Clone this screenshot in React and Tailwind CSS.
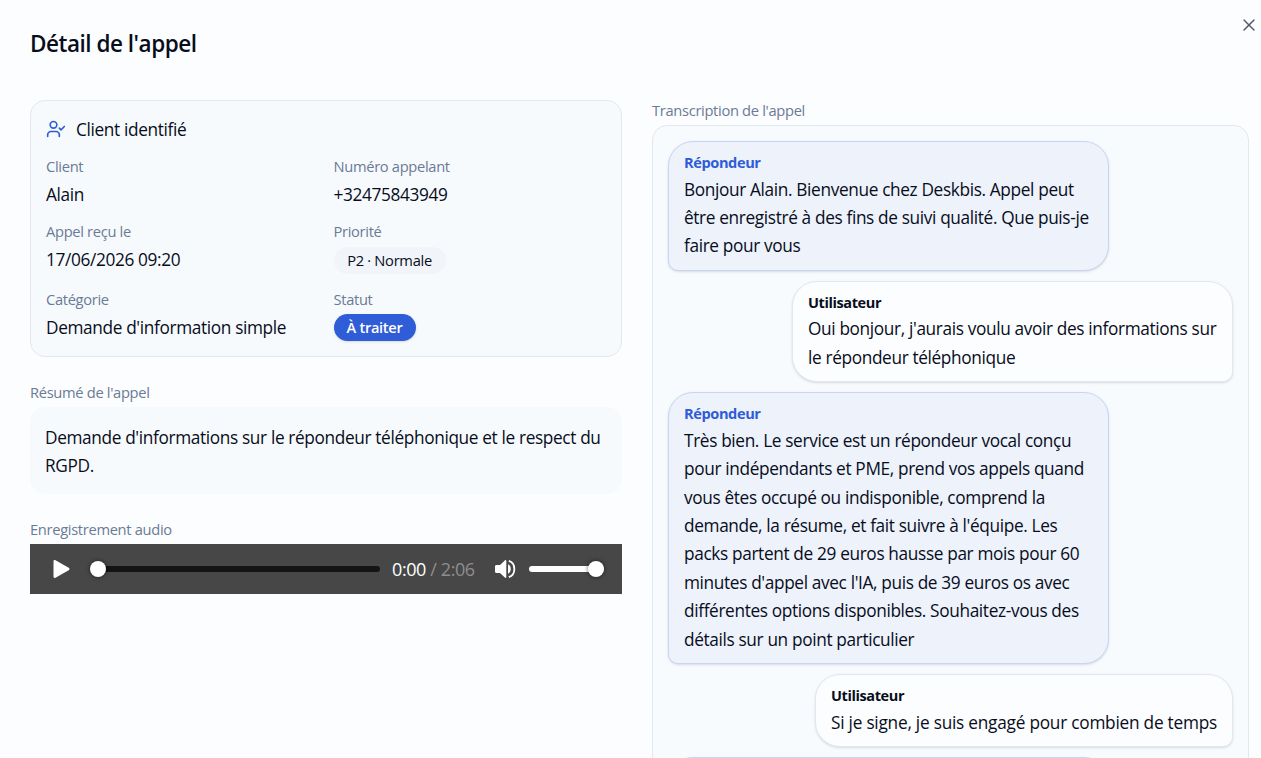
import React from 'react';
import { UserCheck, X } from 'lucide-react';

const messages = [
  {
    role: 'agent',
    lines: [
      'Bonjour Alain. Bienvenue chez Deskbis. Appel peut',
      'être enregistré à des fins de suivi qualité. Que puis-je',
      'faire pour vous',
    ],
  },
  {
    role: 'user',
    width: 'w-[441px]',
    lines: ["Oui bonjour, j'aurais voulu avoir des informations sur", 'le répondeur téléphonique'],
  },
  {
    role: 'agent',
    lines: [
      'Très bien. Le service est un répondeur vocal conçu',
      'pour indépendants et PME, prend vos appels quand',
      'vous êtes occupé ou indisponible, comprend la',
      "demande, la résume, et fait suivre à l'équipe. Les",
      'packs partent de 29 euros hausse par mois pour 60',
      "minutes d'appel avec l'IA, puis de 39 euros os avec",
      'différentes options disponibles. Souhaitez-vous des',
      'détails sur un point particulier',
    ],
  },
  {
    role: 'user',
    width: 'w-[418px] tracking-[-0.24px]',
    lines: ['Si je signe, je suis engagé pour combien de temps'],
  },
  { role: 'agent', lines: [] },
];

const Label = ({ children }) => (
  <p className="pb-[2px] text-[14.7px] leading-[20.5px] tracking-[-0.32px] text-[#6a7b95]">{children}</p>
);

const Field = ({ label, children }) => (
  <div>
    <Label>{label}</Label>
    <div className="mt-[2px]">{children}</div>
  </div>
);

const Value = ({ children }) => <p className="leading-[27px]">{children}</p>;

const Bubble = ({ message }) => {
  const isAgent = message.role === 'agent';
  return (
    <div
      className={
        isAgent
          ? 'min-h-[60px] w-[441px] shrink-0 self-start rounded-[25px] rounded-bl-[10px] border border-[#c8d5f3] bg-[#edf2fb] px-[15px] py-[10px] shadow-sm'
          : `${message.width} shrink-0 self-end rounded-[25px] rounded-br-[10px] border border-[#e2e8f0] bg-[#fcfdff] px-[15px] py-[10px] shadow-sm`
      }
    >
      {message.lines.length > 0 && (
        <p
          className={
            isAgent
              ? 'pb-px text-[14.6px] leading-[21.5px] font-bold tracking-[-0.4px] text-[#2f5cd7]'
              : 'text-[14.5px] leading-[22.5px] font-bold tracking-[-0.4px]'
          }
        >
          {isAgent ? 'Répondeur' : 'Utilisateur'}
        </p>
      )}
      {message.lines.map((line, i) => (
        <p key={i} className="relative top-px leading-[28.44px] whitespace-nowrap">{line}</p>
      ))}
    </div>
  );
};

const AudioPlayer = () => (
  <div className="flex h-[50px] items-center bg-[#474747] pl-[22px] text-white">
    <svg width="18" height="20" viewBox="0 0 18 20" fill="currentColor">
      <path d="M1.500 2.400C1.500 1.200 2.500.7 3.500 1.300l13.200 7.400c1 .6 1 2 0 2.600L3.500 18.700C2.500 19.300 1.500 18.800 1.500 17.600z" />
    </svg>
    <div className="ml-[20px] flex h-[6px] w-[290px] items-center rounded-full bg-gradient-to-r from-transparent from-[8px] to-[#141414] to-[8px]">
      <div className="size-4 rounded-full bg-white shadow-[0_0_4px_rgba(0,0,0,0.6)]" />
    </div>
    <p className="ml-[12px] w-[103px] text-[18px] tracking-[-0.4px] whitespace-nowrap">
      0:00 <span className="text-[#8e8e8e]">/ 2:06</span>
    </p>
    <svg width="21" height="20" viewBox="0 0 21 20" fill="currentColor">
      <path d="M0 7.500C0 6.600.6 6 1.500 6H5l4.800-4.600C10.500.7 11.300 1 11.300 2v16c0 1-.8 1.300-1.500.6L5 14H1.500C.6 14 0 13.400 0 12.500z" />
      <path d="M13 5.300c3.700 1.400 3.700 8 0 9.400z" />
      <path d="M13.800 1.900c7.400 2.400 7.400 13.800 0 16.200" fill="none" stroke="currentColor" strokeWidth="1.800" />
    </svg>
    <div className="ml-[13px] flex h-[6px] w-[75px] items-center justify-end rounded-full bg-white">
      <div className="size-4 rounded-full bg-white shadow-[0_0_4px_rgba(0,0,0,0.6)]" />
    </div>
  </div>
);

export default function App() {
  return (
    <div className="h-[758px] w-[1261px] overflow-hidden bg-[#fcfdff] font-['Open_Sans','Noto_Sans',sans-serif] text-[17.25px] tracking-[-0.36px] text-[#080d1c]">
      <header className="flex h-[100px] items-start justify-between pr-[2px] pl-[30px]">
        <h1 className="mt-[29px] text-[22.5px] leading-[30px] font-semibold tracking-[-0.48px]">Détail de l'appel</h1>
        <button className="mt-[15px]" aria-label="Fermer">
          <X size={20} strokeWidth={1.7} color="#50566b" />
        </button>
      </header>

      <main className="grid grid-cols-[592px_597px] gap-[30px] pl-[30px]">
        <div>
          <section className="h-[257px] rounded-[15px] border border-[#e2e8f0] bg-[#f7fafd] px-[15px] pt-[14px]">
            <div className="flex h-[28px] items-center gap-[10px]">
              <UserCheck size={20} color="#2f5cd7" strokeWidth={2} />
              <h2 className="pt-[2px]">Client identifié</h2>
            </div>
            <div className="mt-[13px] grid grid-cols-2 grid-rows-[53px_56px_53px] gap-x-[15px] gap-y-[12px]">
              <Field label="Client"><Value>Alain</Value></Field>
              <Field label="Numéro appelant"><Value>+32475843949</Value></Field>
              <Field label="Appel reçu le"><Value>17/06/2026 09:20</Value></Field>
              <Field label="Priorité">
                <span className="mt-[3px] flex h-[27px] w-[112px] items-center justify-center rounded-full bg-[#f1f4f9] pt-px text-[14.7px] tracking-[-0.3px]">
                  P2 · Normale
                </span>
              </Field>
              <Field label="Catégorie"><Value>Demande d'information simple</Value></Field>
              <Field label="Statut">
                <span className="flex h-[27px] w-[82px] items-center justify-center rounded-full bg-[#2f5cd7] pt-[2px] text-[14.6px] font-semibold tracking-[-0.3px] text-white shadow-sm">
                  À traiter
                </span>
              </Field>
            </div>
          </section>

          <section className="mt-[25px]">
            <Label>Résumé de l'appel</Label>
            <div className="mt-[2px] h-[87px] rounded-[15px] bg-[#f7fafd] px-[15px] pt-[17px] leading-[28.44px]">
              <p>
                Demande d'informations sur le répondeur téléphonique et le respect du
                <br />
                RGPD.
              </p>
            </div>
          </section>

          <section className="mt-[25px]">
            <Label>Enregistrement audio</Label>
            <div className="mt-[3px]">
              <AudioPlayer />
            </div>
          </section>
        </div>

        <section>
          <Label>Transcription de l'appel</Label>
          <div className="mt-[2.5px] flex h-[700px] flex-col gap-[10px] rounded-[15px] border border-[#e2e8f0] bg-[#f8fbfe] p-[15px]">
            {messages.map((message, i) => (
              <Bubble key={i} message={message} />
            ))}
          </div>
        </section>
      </main>
    </div>
  );
}
